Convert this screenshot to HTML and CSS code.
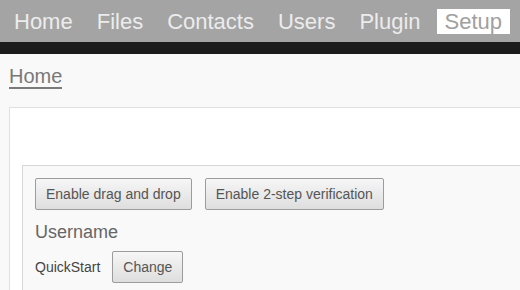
FILE: index.html
```html
<!DOCTYPE html>
<html lang="en">
<head>
    <meta charset="UTF-8">
    <meta name="viewport" content="width=device-width, initial-scale=1.0">
    <title>Setup</title>
    <link rel="stylesheet" href="styles.css">
</head>

<body>

    <div class="nav">
        <a class="nav-item">Home</a>
        <a class="nav-item">Files</a>
        <a class="nav-item">Contacts</a>
        <a class="nav-item">Users</a>
        <a class="nav-item">Plugin</a>
        <a class="nav-item active">Setup</a>
    </div>
    <div class="nav-strip"></div>

    <div class="page">
        <div class="crumb"><span class="crumb-link">Home</span></div>

        <div class="panel">
            <div class="section">
                <div class="btn-row">
                    <button class="btn">Enable drag and drop</button>
                    <button class="btn">Enable 2-step verification</button>
                </div>
                <div class="label">Username</div>
                <div class="user-row">
                    <span class="user-name">QuickStart</span>
                    <button class="btn">Change</button>
                </div>
            </div>
        </div>
    </div>

</body>

</html>
```

FILE: styles.css
```css
body {
    margin: 0;
    font-family: 'Liberation Sans', Arial, sans-serif;
    background-color: #f9f9f9;
    overflow: hidden;
}

/* top menu */
.nav {
    display: flex;
    align-items: center;
    gap: 8px;
    height: 42px;
    padding-left: 6px;
    background-color: #a4a4a4;
}

.nav-item {
    padding: 0 8px;
    font-size: 22px;
    line-height: 25px;
    color: #ececec;
    cursor: pointer;
}

.nav-item.active {
    background-color: #fff;
    color: #a0a0a0;
}

.nav-strip {
    height: 12px;
    background-color: #1c1c1c;
}

.page {
    padding: 0 0 0 9px;
}

.crumb {
    padding-top: 11px;
    height: 42px;
}

.crumb-link {
    display: inline-block;
    font-size: 20px;
    line-height: 22px;
    color: #787878;
    border-bottom: 2px solid #7a7a7a;
}

.panel {
    background-color: #fff;
    border: 1px solid #e0e0e0;
    border-right: none;
    padding: 57px 0 0 12px;
}

.section {
    background-color: #f9f9f9;
    border: 1px solid #d6d6d6;
    border-right: none;
    padding: 12px 12px 10px 12px;
}

.btn-row {
    display: flex;
    gap: 13px;
}

.btn {
    height: 32px;
    padding: 0 10px;
    font-family: 'Liberation Sans', Arial, sans-serif;
    font-size: 14px;
    color: #555;
    background: linear-gradient(#f6f6f6, #dedede);
    border: 1px solid #9c9c9c;
    border-radius: 2px;
    cursor: pointer;
}

.label {
    margin: 12px 0 8px 0;
    font-size: 18px;
    line-height: 21px;
    color: #666;
}

.user-row {
    display: flex;
    align-items: center;
    gap: 12px;
}

.user-name {
    font-size: 14px;
    color: #444;
}
```
